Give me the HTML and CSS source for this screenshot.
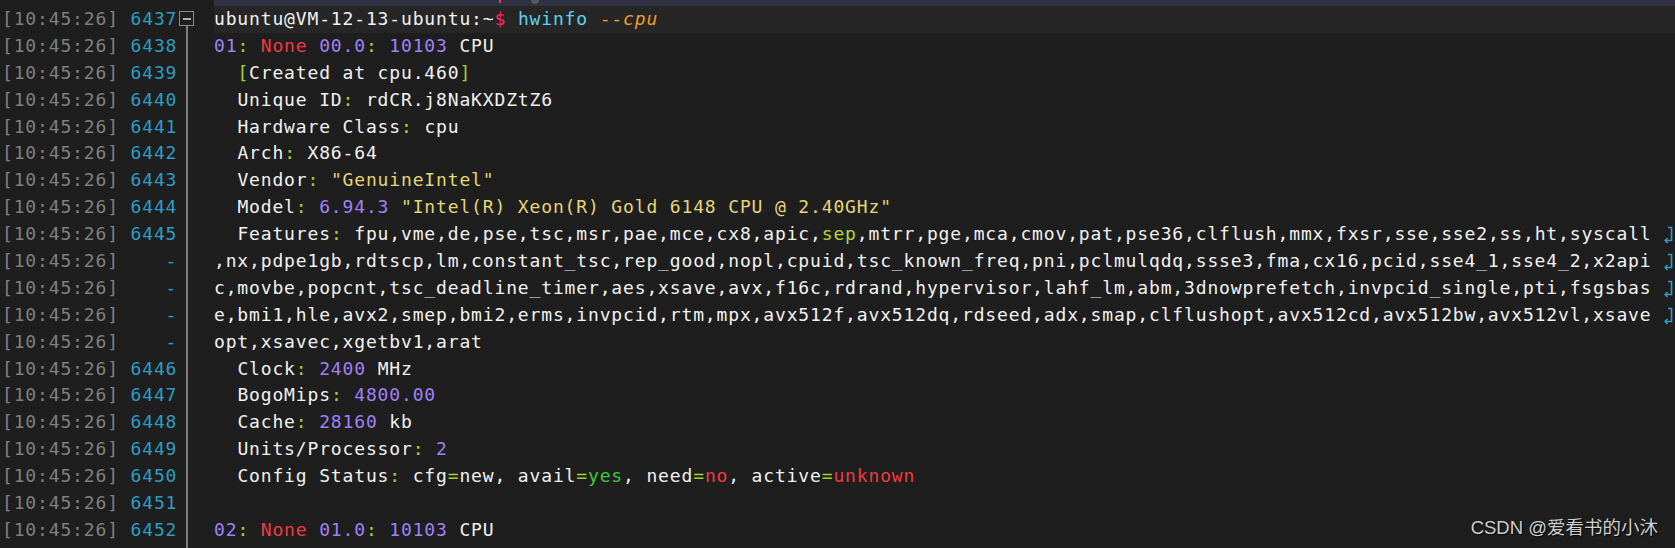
FILE: index.html
```html
<!DOCTYPE html>
<html>
<head>
<meta charset="utf-8">
<link rel="stylesheet" href="styles.css">
</head>
<body>
<div class="editor">
  <div class="gutter">
    <div class="gl"><span class="ts">[10:45:26]</span> <span class="ln">6437</span></div>
    <div class="gl"><span class="ts">[10:45:26]</span> <span class="ln">6438</span></div>
    <div class="gl"><span class="ts">[10:45:26]</span> <span class="ln">6439</span></div>
    <div class="gl"><span class="ts">[10:45:26]</span> <span class="ln">6440</span></div>
    <div class="gl"><span class="ts">[10:45:26]</span> <span class="ln">6441</span></div>
    <div class="gl"><span class="ts">[10:45:26]</span> <span class="ln">6442</span></div>
    <div class="gl"><span class="ts">[10:45:26]</span> <span class="ln">6443</span></div>
    <div class="gl"><span class="ts">[10:45:26]</span> <span class="ln">6444</span></div>
    <div class="gl"><span class="ts">[10:45:26]</span> <span class="ln">6445</span></div>
    <div class="gl"><span class="ts">[10:45:26]</span> <span class="ln">   -</span></div>
    <div class="gl"><span class="ts">[10:45:26]</span> <span class="ln">   -</span></div>
    <div class="gl"><span class="ts">[10:45:26]</span> <span class="ln">   -</span></div>
    <div class="gl"><span class="ts">[10:45:26]</span> <span class="ln">   -</span></div>
    <div class="gl"><span class="ts">[10:45:26]</span> <span class="ln">6446</span></div>
    <div class="gl"><span class="ts">[10:45:26]</span> <span class="ln">6447</span></div>
    <div class="gl"><span class="ts">[10:45:26]</span> <span class="ln">6448</span></div>
    <div class="gl"><span class="ts">[10:45:26]</span> <span class="ln">6449</span></div>
    <div class="gl"><span class="ts">[10:45:26]</span> <span class="ln">6450</span></div>
    <div class="gl"><span class="ts">[10:45:26]</span> <span class="ln">6451</span></div>
    <div class="gl"><span class="ts">[10:45:26]</span> <span class="ln">6452</span></div>
  </div>
  <div class="fold">
    <div class="fold-box"><div class="fold-minus"></div></div>
    <div class="fold-line"></div>
  </div>
  <div class="code">
    <div class="strip"><span class="mark-pink"></span><span class="mark-dot"></span></div>
    <div class="row current"><span class="w">ubuntu@VM-12-13-ubuntu:~</span><span class="dollar">$</span> <span class="cmd">hwinfo</span> <span class="opt">--<i>cpu</i></span></div>
    <div class="row"><span class="p">01</span><span class="g">:</span> <span class="r">None</span> <span class="p">00.0</span><span class="g">:</span> <span class="p">10103</span> <span class="w">CPU</span></div>
    <div class="row">  <span class="g">[</span><span class="w">Created at cpu.460</span><span class="g">]</span></div>
    <div class="row">  <span class="w">Unique ID</span><span class="g">:</span> <span class="w">rdCR.j8NaKXDZtZ6</span></div>
    <div class="row">  <span class="w">Hardware Class</span><span class="g">:</span> <span class="w">cpu</span></div>
    <div class="row">  <span class="w">Arch</span><span class="g">:</span> <span class="w">X86-64</span></div>
    <div class="row">  <span class="w">Vendor</span><span class="g">:</span> <span class="y">"GenuineIntel"</span></div>
    <div class="row">  <span class="w">Model</span><span class="g">:</span> <span class="p">6.94.3</span> <span class="y">"Intel(R) Xeon(R) Gold 6148 CPU @ 2.40GHz"</span></div>
    <div class="row">  <span class="w">Features</span><span class="g">:</span> <span class="w">fpu,vme,de,pse,tsc,msr,pae,mce,cx8,apic,</span><span class="sep">sep</span><span class="w">,mtrr,pge,mca,cmov,pat,pse36,clflush,mmx,fxsr,sse,sse2,ss,ht,syscall</span> <svg class="wrap" viewBox="0 0 12 24"><path d="M5 5.5 H8.5 V18.5 H2.5 M4.5 16 L2.2 18.5 L4.5 21" fill="none" stroke="#2d9cc4" stroke-width="1.6"/></svg></div>
    <div class="row"><span class="w">,nx,pdpe1gb,rdtscp,lm,constant_tsc,rep_good,nopl,cpuid,tsc_known_freq,pni,pclmulqdq,ssse3,fma,cx16,pcid,sse4_1,sse4_2,x2api</span> <svg class="wrap" viewBox="0 0 12 24"><path d="M5 5.5 H8.5 V18.5 H2.5 M4.5 16 L2.2 18.5 L4.5 21" fill="none" stroke="#2d9cc4" stroke-width="1.6"/></svg></div>
    <div class="row"><span class="w">c,movbe,popcnt,tsc_deadline_timer,aes,xsave,avx,f16c,rdrand,hypervisor,lahf_lm,abm,3dnowprefetch,invpcid_single,pti,fsgsbas</span> <svg class="wrap" viewBox="0 0 12 24"><path d="M5 5.5 H8.5 V18.5 H2.5 M4.5 16 L2.2 18.5 L4.5 21" fill="none" stroke="#2d9cc4" stroke-width="1.6"/></svg></div>
    <div class="row"><span class="w">e,bmi1,hle,avx2,smep,bmi2,erms,invpcid,rtm,mpx,avx512f,avx512dq,rdseed,adx,smap,clflushopt,avx512cd,avx512bw,avx512vl,xsave</span> <svg class="wrap" viewBox="0 0 12 24"><path d="M5 5.5 H8.5 V18.5 H2.5 M4.5 16 L2.2 18.5 L4.5 21" fill="none" stroke="#2d9cc4" stroke-width="1.6"/></svg></div>
    <div class="row"><span class="w">opt,xsavec,xgetbv1,arat</span></div>
    <div class="row">  <span class="w">Clock</span><span class="g">:</span> <span class="p">2400</span> <span class="w">MHz</span></div>
    <div class="row">  <span class="w">BogoMips</span><span class="g">:</span> <span class="p">4800.00</span></div>
    <div class="row">  <span class="w">Cache</span><span class="g">:</span> <span class="p">28160</span> <span class="w">kb</span></div>
    <div class="row">  <span class="w">Units/Processor</span><span class="g">:</span> <span class="p">2</span></div>
    <div class="row">  <span class="w">Config Status</span><span class="g">:</span> <span class="w">cfg</span><span class="eq">=</span><span class="w">new, avail</span><span class="eq">=</span><span class="yes">yes</span><span class="w">, need</span><span class="eq">=</span><span class="r">no</span><span class="w">, active</span><span class="eq">=</span><span class="r">unknown</span></div>
    <div class="row"> </div>
    <div class="row"><span class="p">02</span><span class="g">:</span> <span class="r">None</span> <span class="p">01.0</span><span class="g">:</span> <span class="p">10103</span> <span class="w">CPU</span></div>
  </div>
</div>
<div class="watermark">CSDN @爱看书的小沐</div>
</body>
</html>
```

FILE: styles.css
```css
html, body {
  margin: 0;
  padding: 0;
  background: #1e1e1e;
  width: 1675px;
  height: 548px;
  overflow: hidden;
}

.editor {
  display: flex;
  height: 548px;
  font-family: "DejaVu Sans Mono", "Liberation Mono", monospace;
  font-size: 18px;
  letter-spacing: 0.85px;
  line-height: 26.9px;
  color: #f2f2f2;
}

.gutter {
  display: flex;
  flex-direction: column;
  padding-top: 6px;
  padding-left: 2px;
  width: 178px;
  box-sizing: border-box;
  flex: none;
}

.gl {
  height: 26.9px;
  white-space: pre;
  flex: none;
}

.ts { color: #808080; }
.ln { color: #2d9cc4; }

.fold {
  width: 36px;
  flex: none;
  display: flex;
  flex-direction: column;
  align-items: flex-start;
  padding-left: 1px;
  box-sizing: border-box;
}

.fold-box {
  margin-top: 11px;
  width: 15px;
  height: 15px;
  box-sizing: border-box;
  border: 1.5px solid #8a8a8a;
  display: flex;
  align-items: center;
  justify-content: center;
}

.fold-minus {
  width: 8px;
  height: 2px;
  background: #b0b0b0;
}

.fold-line {
  flex: 1;
  width: 2px;
  margin-left: 6.5px;
  background: #7c7c7c;
}

.code {
  flex: 1;
  display: flex;
  flex-direction: column;
}

.strip {
  height: 6px;
  flex: none;
  background: #2f3140;
  position: relative;
}

.mark-pink {
  position: absolute;
  left: 285px;
  top: 0;
  width: 2px;
  height: 3px;
  background: #e0406a;
}

.mark-dot {
  position: absolute;
  left: 317px;
  top: -4px;
  width: 8px;
  height: 8px;
  border-radius: 50%;
  background: #5a5a5e;
}

.row {
  height: 26.9px;
  flex: none;
  white-space: pre;
}

.row.current {
  background: #262626;
}

.w { color: #f2f2f2; }
.p { color: #a181f7; }
.r { color: #f2393f; }
.g { color: #a6cf34; }
.y { color: #e5d575; }
.sep { color: #b5d337; }
.eq { color: #a6cf34; }
.yes { color: #3cc83c; }
.dollar { color: #f5286e; }
.cmd { color: #5bd3f0; }
.opt { color: #f39c26; }
.opt i { font-style: italic; }

.wrap {
  display: inline-block;
  width: 12px;
  height: 24px;
  vertical-align: -6px;
}

.watermark {
  position: absolute;
  right: 17px;
  bottom: 9px;
  font-family: "Liberation Sans", "Noto Sans CJK SC", sans-serif;
  font-size: 18.5px;
  color: #cfcfcf;
  text-shadow: 1px 1px 1px #000;
}
```
